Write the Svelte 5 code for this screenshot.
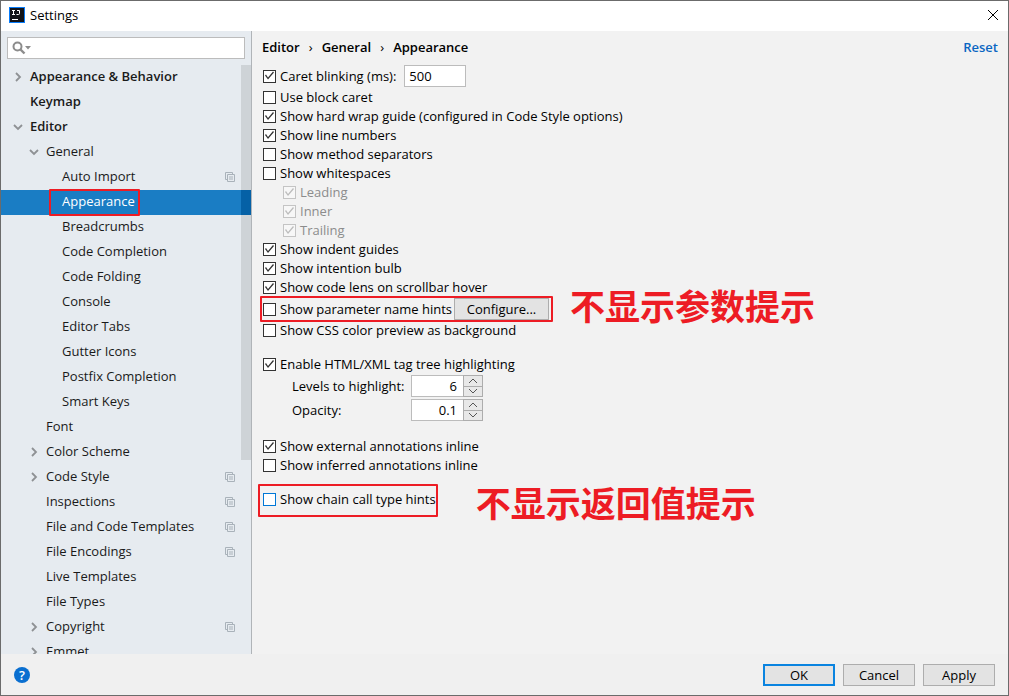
<script>
  const tree = [
    { name: 'Appearance & Behavior', level: 0, state: 'closed' },
    { name: 'Keymap', level: 0 },
    { name: 'Editor', level: 0, state: 'open' },
    { name: 'General', level: 1, state: 'open' },
    { name: 'Auto Import', level: 2, project: true },
    { name: 'Appearance', level: 2 },
    { name: 'Breadcrumbs', level: 2 },
    { name: 'Code Completion', level: 2 },
    { name: 'Code Folding', level: 2 },
    { name: 'Console', level: 2 },
    { name: 'Editor Tabs', level: 2 },
    { name: 'Gutter Icons', level: 2 },
    { name: 'Postfix Completion', level: 2 },
    { name: 'Smart Keys', level: 2 },
    { name: 'Font', level: 1 },
    { name: 'Color Scheme', level: 1, state: 'closed' },
    { name: 'Code Style', level: 1, state: 'closed', project: true },
    { name: 'Inspections', level: 1, project: true },
    { name: 'File and Code Templates', level: 1, project: true },
    { name: 'File Encodings', level: 1, project: true },
    { name: 'Live Templates', level: 1 },
    { name: 'File Types', level: 1 },
    { name: 'Copyright', level: 1, state: 'closed', project: true },
    { name: 'Emmet', level: 1, state: 'closed' }
  ]

  let selected = $state('Appearance')
  let search = $state('')
  let caretBlinking = $state(true)
  let caretMs = $state('500')
  let paramHints = $state(false)
  let cssPreview = $state(false)
  let tagTree = $state(true)
  let levels = $state(6)
  let opacity = $state(0.1)
  let chainHints = $state(false)

  let options = $state([
    { name: 'Use block caret', on: false },
    { name: 'Show hard wrap guide (configured in Code Style options)', on: true },
    { name: 'Show line numbers', on: true },
    { name: 'Show method separators', on: false },
    { name: 'Show whitespaces', on: false },
    { name: 'Leading', on: true, sub: true },
    { name: 'Inner', on: true, sub: true },
    { name: 'Trailing', on: true, sub: true },
    { name: 'Show indent guides', on: true },
    { name: 'Show intention bulb', on: true },
    { name: 'Show code lens on scrollbar hover', on: true }
  ])

  let annotations = $state([
    { name: 'Show external annotations inline', on: true },
    { name: 'Show inferred annotations inline', on: false }
  ])

  function stepOpacity(d) {
    opacity = Math.round((opacity + d) * 10) / 10
  }
</script>

{#snippet arrows(up, down)}
  <div class="arrows">
    <button aria-label="Increase" onclick={up}>
      <svg width="10" height="6" viewBox="0 0 10 6"><path d="M1 5 L5 1 L9 5" /></svg>
    </button>
    <button aria-label="Decrease" onclick={down}>
      <svg width="10" height="6" viewBox="0 0 10 6"><path d="M1 1 L5 5 L9 1" /></svg>
    </button>
  </div>
{/snippet}

<div class="window">
  <header>
    <svg class="logo" width="16" height="16" viewBox="0 0 16 16">
      <rect width="16" height="16" fill="#087cfa" />
      <rect x="1" y="1" width="14" height="14" fill="#111318" />
      <path d="M3 3.5 H6 M4.5 3.5 V7 M3 7.5 H6 M8 3.5 H10.5 V6.5 Q10.5 7.5 9.5 7.5 H7.5" fill="none" stroke="#fff" />
      <rect x="3" y="12" width="6" height="1" fill="#fff" />
    </svg>
    <h1>Settings</h1>
    <button class="close" aria-label="Close">
      <svg width="12" height="12" viewBox="0 0 12 12"><path d="M1 1 L11 11 M11 1 L1 11" /></svg>
    </button>
  </header>

  <div class="main">
    <aside>
      <div class="search">
        <svg width="20" height="14" viewBox="0 0 20 14">
          <circle cx="5.5" cy="5.5" r="4" fill="none" stroke="#8c8c8c" stroke-width="2" />
          <path d="M8.5 8.5 L12.5 12.5" stroke="#8c8c8c" stroke-width="2.4" />
          <path d="M13 5 H19 L16 8.5 Z" fill="#8c8c8c" />
        </svg>
        <input aria-label="Search settings" bind:value={search} />
      </div>
      <nav>
        {#each tree as item}
          <button
            class="node level{item.level}"
            class:selected={selected === item.name}
            onclick={() => selected = item.name}
          >
            <span class="twisty">
              {#if item.state === 'closed'}
                <svg width="10" height="10" viewBox="0 0 10 10"><path d="M3 1 L7 5 L3 9" /></svg>
              {:else if item.state === 'open'}
                <svg width="10" height="10" viewBox="0 0 10 10"><path d="M1 3 L5 7 L9 3" /></svg>
              {/if}
            </span>
            <span class="name" class:marked={item.name === 'Appearance'}>{item.name}</span>
            {#if item.project}
              <svg class="project" width="10" height="10" viewBox="0 0 10 10">
                <path d="M2 7.5 H0.5 V0.5 H7.5 V2 M2.5 2.5 H9.5 V9.5 H2.5 Z M4 5 H8 M4 7 H8" />
              </svg>
            {/if}
          </button>
        {/each}
        <div class="scrollbar"></div>
      </nav>
    </aside>

    <main>
      <div class="top">
        <div class="crumbs">
          <b>Editor</b><i>›</i><b>General</b><i>›</i><b>Appearance</b>
        </div>
        <a href="#reset">Reset</a>
      </div>

      <div class="row caret">
        <label class="check"><input type="checkbox" bind:checked={caretBlinking} />Caret blinking (ms):</label>
        <input class="field" aria-label="Caret blinking (ms)" bind:value={caretMs} />
      </div>
      {#each options as option}
        <label class="check" class:sub={option.sub}>
          <input type="checkbox" bind:checked={option.on} disabled={option.sub} />{option.name}
        </label>
      {/each}
      <div class="row params">
        <label class="check"><input type="checkbox" bind:checked={paramHints} />Show parameter name hints</label>
        <button class="push">Configure...</button>
        <span class="note">不显示参数提示</span>
      </div>
      <label class="check"><input type="checkbox" bind:checked={cssPreview} />Show CSS color preview as background</label>

      <div class="group">
        <label class="check"><input type="checkbox" bind:checked={tagTree} />Enable HTML/XML tag tree highlighting</label>
        <div class="spinners">
          <label for="levels">Levels to highlight:</label>
          <div class="spinner">
            <input id="levels" type="number" bind:value={levels} />
            {@render arrows(() => levels++, () => levels--)}
          </div>
          <label for="opacity">Opacity:</label>
          <div class="spinner">
            <input id="opacity" type="number" step="0.1" bind:value={opacity} />
            {@render arrows(() => stepOpacity(0.1), () => stepOpacity(-0.1))}
          </div>
        </div>
      </div>

      <div class="group">
        {#each annotations as option}
          <label class="check"><input type="checkbox" bind:checked={option.on} />{option.name}</label>
        {/each}
      </div>

      <div class="group">
        <div class="row chain">
          <label class="check"><input class="focused" type="checkbox" bind:checked={chainHints} />Show chain call type hints</label>
          <span class="note">不显示返回值提示</span>
        </div>
      </div>
    </main>
  </div>

  <footer>
    <button class="help" aria-label="Help">?</button>
    <button class="push default">OK</button>
    <button class="push">Cancel</button>
    <button class="push">Apply</button>
  </footer>
</div>

<style>
  :global(body) {
    margin: 0;
  }

  .window {
    box-sizing: border-box;
    height: 100vh;
    display: flex;
    flex-direction: column;
    border: 1px solid #6b6b6b;
    background: #f2f2f2;
    color: #000;
    font: 13px/19px "Open Sans", "Noto Sans CJK SC", sans-serif;
  }

  button, input {
    box-sizing: border-box;
    margin: 0;
    padding: 0;
    font: inherit;
    color: inherit;
  }

  header {
    flex: none;
    box-sizing: border-box;
    display: flex;
    align-items: center;
    height: 30px;
    padding: 0 9px 2px 8px;
    background: #fff;
  }

  h1 {
    flex: 1;
    margin: 0 0 0 5px;
    font-size: 13px;
    font-weight: normal;
  }

  .close {
    display: flex;
    border: none;
    background: none;
  }

  .close path {
    stroke: #000;
    fill: none;
  }

  .main {
    flex: 1;
    min-height: 0;
    display: flex;
  }

  aside {
    flex: none;
    width: 250px;
    display: flex;
    flex-direction: column;
    background: #e6ebf0;
    border-right: 1px solid #b0b4b8;
  }

  .search {
    flex: none;
    display: flex;
    align-items: center;
    height: 20px;
    margin: 6px;
    padding-left: 4px;
    border: 1px solid #bcbcbc;
    background: #fff;
  }

  .search input {
    flex: 1;
    min-width: 0;
    border: none;
    outline: none;
    background: none;
  }

  nav {
    flex: 1;
    min-height: 0;
    position: relative;
    overflow: hidden;
  }

  .node {
    display: flex;
    align-items: center;
    width: 100%;
    height: 25px;
    padding-bottom: 2px;
    border: none;
    border-right: 10px solid transparent;
    background: none;
    text-align: left;
    color: #1a1a1a;
  }

  .level0 {
    padding-left: 12px;
    font-weight: 600;
  }

  .level1 {
    padding-left: 28px;
  }

  .level2 {
    padding-left: 44px;
  }

  .selected {
    background: #1a7dc4;
    border-right-color: #066cb9;
    color: #fff;
  }

  .twisty {
    flex: none;
    display: flex;
    width: 17px;
  }

  .twisty path {
    fill: none;
    stroke: #8e9194;
    stroke-width: 1.8;
  }

  .name {
    position: relative;
  }

  .marked::after {
    content: "";
    position: absolute;
    inset: -3px -5px -5px -13px;
    border: 2px solid #ed1c24;
    border-radius: 1px;
  }

  .project {
    margin-left: auto;
    margin-right: 6px;
  }

  .project path {
    fill: none;
    stroke: #a9b2ba;
  }

  .scrollbar {
    position: absolute;
    top: 0;
    right: 0;
    width: 10px;
    height: 67%;
    background: rgba(0, 0, 0, 0.1);
  }

  main {
    flex: 1;
    min-width: 0;
    padding: 6px 10px 0 11px;
  }

  .top {
    display: flex;
    justify-content: space-between;
    height: 28px;
    line-height: 21px;
  }

  .crumbs {
    display: flex;
    margin-left: -1px;
  }

  b, a {
    font-weight: 600;
  }

  i {
    width: 22px;
    text-align: center;
    font-style: normal;
  }

  a {
    color: #0a66c2;
    text-decoration: none;
  }

  .row {
    display: flex;
    align-items: center;
    position: relative;
    width: fit-content;
  }

  .caret {
    margin-bottom: 1px;
  }

  .params {
    height: 24px;
  }

  .check {
    display: flex;
    align-items: center;
    gap: 4px;
    width: fit-content;
    height: 19px;
    white-space: nowrap;
  }

  .sub {
    margin-left: 20px;
    color: #8c8c8c;
  }

  .check input {
    appearance: none;
    display: grid;
    place-content: center;
    flex: none;
    width: 13px;
    height: 13px;
    border: 1px solid #333;
    background: #fff;
  }

  .check input:checked::before {
    content: "";
    width: 11px;
    height: 11px;
    background: #333;
    clip-path: polygon(1px 5px, 2px 4px, 4px 7px, 9px 1px, 10px 2px, 4px 9px);
  }

  .check input:disabled {
    border-color: #c4c4c4;
    background: #f7f7f7;
  }

  .check input:disabled::before {
    background: #bcbcbc;
  }

  .check input.focused {
    border-color: #0078d7;
  }

  .field {
    width: 62px;
    height: 22px;
    margin-left: 8px;
    padding-left: 4px;
    border: 1px solid #bcbcbc;
    background: #fff;
  }

  .push {
    height: 22px;
    min-width: 72px;
    border: 1px solid #adadad;
    background: #e3e3e3;
    line-height: 18px;
  }

  .params .push {
    width: 95px;
    margin-left: 2px;
  }

  .params::after, .chain::after {
    content: "";
    position: absolute;
    border: 2px solid #ed1c24;
    border-radius: 1px;
    pointer-events: none;
  }

  .params::after {
    inset: -1px -4px -1px -3px;
  }

  .chain::after {
    inset: -6px -2px -8px -5px;
  }

  .note {
    position: absolute;
    top: 50%;
    left: 100%;
    margin: -24px 0 0 21px;
    color: #ed1c24;
    font: bold 35px/40px "Noto Sans CJK SC", sans-serif;
    white-space: nowrap;
  }

  .chain .note {
    margin: -18px 0 0 40px;
  }

  .group {
    margin-top: 15px;
  }

  .spinners {
    display: grid;
    grid-template-columns: 119px 72px;
    gap: 2px 0;
    align-items: center;
    padding: 1px 0 1px 29px;
  }

  .spinner {
    display: flex;
    height: 22px;
  }

  .spinner input {
    appearance: textfield;
    flex: 1;
    min-width: 0;
    padding-right: 6px;
    border: 1px solid #bcbcbc;
    border-right: none;
    background: #fff;
    text-align: right;
  }

  .spinner input::-webkit-inner-spin-button {
    appearance: none;
    margin: 0;
  }

  .arrows {
    display: flex;
    flex-direction: column;
    width: 20px;
  }

  .arrows button {
    flex: 1;
    display: grid;
    place-content: center;
    border: 1px solid #adadad;
    background: #e8e8e8;
  }

  .arrows button + button {
    border-top: none;
  }

  .arrows path {
    fill: none;
    stroke: #555;
  }

  footer {
    flex: none;
    display: flex;
    align-items: center;
    gap: 8px;
    height: 41px;
    padding: 0 13px;
    background: #f0f0f0;
  }

  .help {
    width: 16px;
    height: 16px;
    margin-right: auto;
    border: none;
    border-radius: 50%;
    background: #0a6fd0;
    color: #fff;
    font-weight: 600;
    line-height: 16px;
  }

  .default {
    border: 2px solid #0a84e0;
    line-height: 16px;
  }
</style>
